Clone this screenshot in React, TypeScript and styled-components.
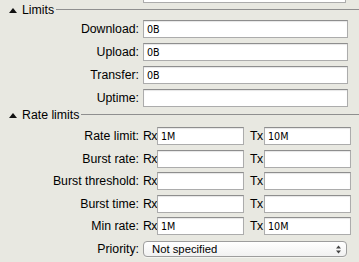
import * as React from 'react'
import styled, { createGlobalStyle } from 'styled-components'

const GlobalStyle = createGlobalStyle`
  html, body {
    margin: 0;
    padding: 0;
    background: #e8e8e1;
  }
  body {
    font-family: 'Liberation Sans', Arial, sans-serif;
    color: #000;
  }
`

const Page = styled.div`
  width: 359px;
  height: 262px;
  overflow: hidden;
  background: #e8e8e1;
`

const TopStub = styled.div`
  height: 3px;
  overflow: hidden;
  display: flex;
  align-items: flex-end;
  padding-left: 143px;
`

const TextBox = styled.input<{ $width?: number }>`
  box-sizing: border-box;
  height: 18px;
  width: ${(p) => (p.$width ? `${p.$width}px` : '100%')};
  margin: 0;
  padding: 1px 3px 0;
  background: #fff;
  border: 1px solid #acacac;
  border-top-color: #8e8e8e;
  border-radius: 0;
  box-shadow: inset 0 1px 1px rgba(0, 0, 0, 0.1);
  font-family: 'DejaVu Sans', Verdana, sans-serif;
  font-size: 9.6px;
  color: #000;
  outline: none;
`

const Header = styled.div<{ $top: number; $bottom: number }>`
  display: flex;
  align-items: center;
  height: 14px;
  padding-left: 9px;
  margin-top: ${(p) => p.$top}px;
  margin-bottom: ${(p) => p.$bottom}px;
`

const Disclosure = styled.svg`
  width: 8px;
  height: 5px;
  margin-right: 5px;
  flex: none;
`

const HeaderTitle = styled.span`
  font-size: 12.3px;
  white-space: nowrap;
`

const Rule = styled.div`
  flex: 1;
  height: 1px;
  margin-left: 2px;
  margin-top: -2px;
  background: #8f8f8f;
`

const Rows = styled.div<{ $gap: number }>`
  display: flex;
  flex-direction: column;
  gap: ${(p) => p.$gap}px;
`

const FieldRow = styled.div`
  display: grid;
  grid-template-columns: 143px 205px;
  align-items: center;
`

const RateRow = styled.div`
  display: grid;
  grid-template-columns: 143px 14px 87px 20px 87px;
  align-items: center;
`

const Label = styled.label`
  font-size: 12.3px;
  text-align: right;
  padding-right: 4px;
  white-space: nowrap;
`

const Dir = styled.span<{ $pad: number }>`
  font-size: 12.3px;
  letter-spacing: -0.6px;
  padding-left: ${(p) => p.$pad}px;
  white-space: nowrap;
`

const PriorityRow = styled.div`
  display: grid;
  grid-template-columns: 143px 204px;
  align-items: center;
  margin-top: 6px;
`

const SelectBox = styled.div`
  box-sizing: border-box;
  height: 16px;
  display: flex;
  align-items: center;
  justify-content: space-between;
  padding: 0 5px 0 8px;
  border: 1px solid #9d9d9d;
  border-radius: 4px;
  background: linear-gradient(#ffffff, #f1f1f1);
  box-shadow: 0 1px 0 rgba(255, 255, 255, 0.5);
  font-size: 11.3px;
`

const Arrows = styled.svg`
  width: 5px;
  height: 9px;
  flex: none;
`

function SectionHeader({ title, top, bottom }: { title: string; top: number; bottom: number }) {
  return (
    <Header $top={top} $bottom={bottom}>
      <Disclosure viewBox="0 0 8 5">
        <polygon points="0,5 4,0 8,5" fill="#111" />
      </Disclosure>
      <HeaderTitle>{title}</HeaderTitle>
      <Rule />
    </Header>
  )
}

const limits = [
  { label: 'Download:', value: '0B' },
  { label: 'Upload:', value: '0B' },
  { label: 'Transfer:', value: '0B' },
  { label: 'Uptime:', value: '' },
]

const rates = [
  { label: 'Rate limit:', rx: '1M', tx: '10M' },
  { label: 'Burst rate:', rx: '', tx: '' },
  { label: 'Burst threshold:', rx: '', tx: '' },
  { label: 'Burst time:', rx: '', tx: '' },
  { label: 'Min rate:', rx: '1M', tx: '10M' },
]

export default function App() {
  return (
    <Page>
      <GlobalStyle />
      <TopStub>
        <TextBox $width={203} readOnly />
      </TopStub>
      <SectionHeader title="Limits" top={0} bottom={3} />
      <Rows $gap={5}>
        {limits.map((f) => (
          <FieldRow key={f.label}>
            <Label>{f.label}</Label>
            <TextBox defaultValue={f.value} />
          </FieldRow>
        ))}
      </Rows>
      <SectionHeader title="Rate limits" top={1} bottom={5} />
      <Rows $gap={4.5}>
        {rates.map((r) => (
          <RateRow key={r.label}>
            <Label>{r.label}</Label>
            <Dir $pad={0}>Rx</Dir>
            <TextBox defaultValue={r.rx} />
            <Dir $pad={6}>Tx</Dir>
            <TextBox defaultValue={r.tx} />
          </RateRow>
        ))}
      </Rows>
      <PriorityRow>
        <Label>Priority:</Label>
        <SelectBox>
          <span>Not specified</span>
          <Arrows viewBox="0 0 5 9">
            <polygon points="0,3.5 2.5,0.5 5,3.5" fill="#444" />
            <polygon points="0,5.5 2.5,8.5 5,5.5" fill="#444" />
          </Arrows>
        </SelectBox>
      </PriorityRow>
    </Page>
  )
}
